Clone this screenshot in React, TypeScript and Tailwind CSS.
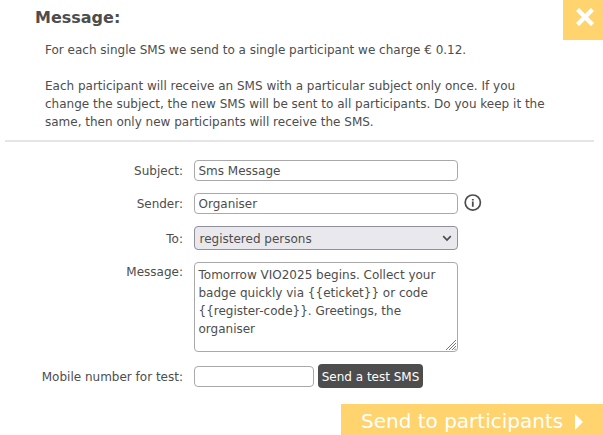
import { useState } from "react";
import type { ReactNode } from "react";

const fieldClass =
  "block h-[21px] rounded-[4px] border border-[#a9a9a9] bg-white px-[3.5px] text-[12px] leading-[18px] text-[#4d4d4d] outline-none";

function Row({ label, className, labelClass, children }: { label: string; className: string; labelClass: string; children: ReactNode }) {
  return (
    <div className={`flex ${className}`}>
      <label className={`w-[183px] shrink-0 text-right ${labelClass}`}>{label}</label>
      <div className="ml-[11px] flex">{children}</div>
    </div>
  );
}

export default function App() {
  const [subject, setSubject] = useState("Sms Message");
  const [sender, setSender] = useState("Organiser");
  const [mobile, setMobile] = useState("");
  const [message, setMessage] = useState(
    "Tomorrow VIO2025 begins. Collect your badge quickly via {{eticket}} or code {{register-code}}. Greetings, the organiser"
  );

  return (
    <div className="flex h-[435px] w-[603px] flex-col overflow-hidden bg-white font-['DejaVu_Sans',sans-serif] text-[12px] leading-[18px] text-[#4d4d4d]">
      {/* Header */}
      <div className="flex h-10 shrink-0 justify-between">
        <h1 className="mt-1.5 ml-[35px] text-[16px] leading-6 font-bold">Message:</h1>
        <button aria-label="Close" className="flex h-10 w-10 justify-center bg-[#ffd36e] pt-2 pl-1">
          <svg width="18" height="18" viewBox="0 0 18 18" fill="none" stroke="#fff" strokeWidth="4.4">
            <path d="M1.5 1.5 16.5 16.5M16.5 1.5 1.5 16.5" />
          </svg>
        </button>
      </div>

      <div className="mr-[9px] ml-[5px] h-[102px] shrink-0 border-b-2 border-[#e5e5e5] pt-px pl-10">
        <p>For each single SMS we send to a single participant we charge € 0.12.</p>
        <p className="mt-[18px] w-[505px]">
          Each participant will receive an SMS with a particular subject only once. If you change the subject, the new SMS will be sent to all participants. Do you keep it the same, then only new participants will receive the SMS.
        </p>
      </div>

      {/* Form */}
      <div className="shrink-0">
        <Row label="Subject:" className="mt-[18px]" labelClass="pt-0.5">
          <input className={`${fieldClass} w-[264px]`} value={subject} onChange={(e) => setSubject(e.target.value)} />
        </Row>
        <Row label="Sender:" className="mt-3" labelClass="pt-0.5">
          <input className={`${fieldClass} w-[264px]`} value={sender} onChange={(e) => setSender(e.target.value)} />
          <svg className="mt-px ml-1.5 h-[18px] w-[18px]" viewBox="0 0 18 18" fill="none">
            <circle cx="8.8" cy="8.6" r="7.6" stroke="#4d4d4d" strokeWidth="1.7" />
            <path d="M8.8 5v1.6M8.8 7.6v5.1" stroke="#4d4d4d" strokeWidth="1.8" />
          </svg>
        </Row>
        <Row label="To:" className="mt-3" labelClass="pt-1">
          <div className="relative">
            <select className="block h-6 w-[264px] appearance-none rounded-[4px] border border-[#8f8f9d] bg-[#e9e9ed] pt-0.5 pl-[4.5px] text-[12px] leading-[18px] outline-none">
              <option>registered persons</option>
            </select>
            <svg className="pointer-events-none absolute top-[9px] right-1.5 h-[7px] w-[10px]" viewBox="0 0 10 7" fill="none" stroke="#4d4d4d" strokeWidth="1.7">
              <path d="M1.2 1.2 5 5l3.8-3.8" />
            </svg>
          </div>
        </Row>
        <Row label="Message:" className="mt-3" labelClass="pt-px">
          <div className="relative">
            <textarea
              className="block h-[90px] w-[264px] resize-none overflow-hidden rounded-[4px] border border-[#a9a9a9] bg-white px-[3.5px] py-[3px] text-[12px] leading-[18px] outline-none"
              value={message}
              onChange={(e) => setMessage(e.target.value)}
            />
            <svg className="pointer-events-none absolute right-[2px] bottom-[2px] h-[10px] w-[10px]" viewBox="0 0 10 10" stroke="#777" strokeWidth="1">
              <path d="M0 10 10 0M3 10 10 3M6 10 10 6M8.5 10 10 8.5" />
            </svg>
          </div>
        </Row>
        <Row label="Mobile number for test:" className="mt-3" labelClass="pt-1">
          <input className={`${fieldClass} mt-0.5 w-[120px]`} value={mobile} onChange={(e) => setMobile(e.target.value)} />
          <button className="ml-1 h-6 w-[105px] rounded-[4px] bg-[#4d4d4d] pt-0.5 text-[12px] leading-[18px] whitespace-nowrap text-white">
            Send a test SMS
          </button>
        </Row>
      </div>

      <button className="mt-4 flex h-[31px] w-[262px] shrink-0 items-start self-end bg-[#ffd36e] pl-5 text-[20px] leading-[34px] whitespace-nowrap text-white">
        Send to participants
        <svg className="mt-2.5 ml-3 h-4 w-2" viewBox="0 0 8 16" fill="currentColor">
          <path d="M0 0 8 8 0 16z" />
        </svg>
      </button>
    </div>
  );
}
